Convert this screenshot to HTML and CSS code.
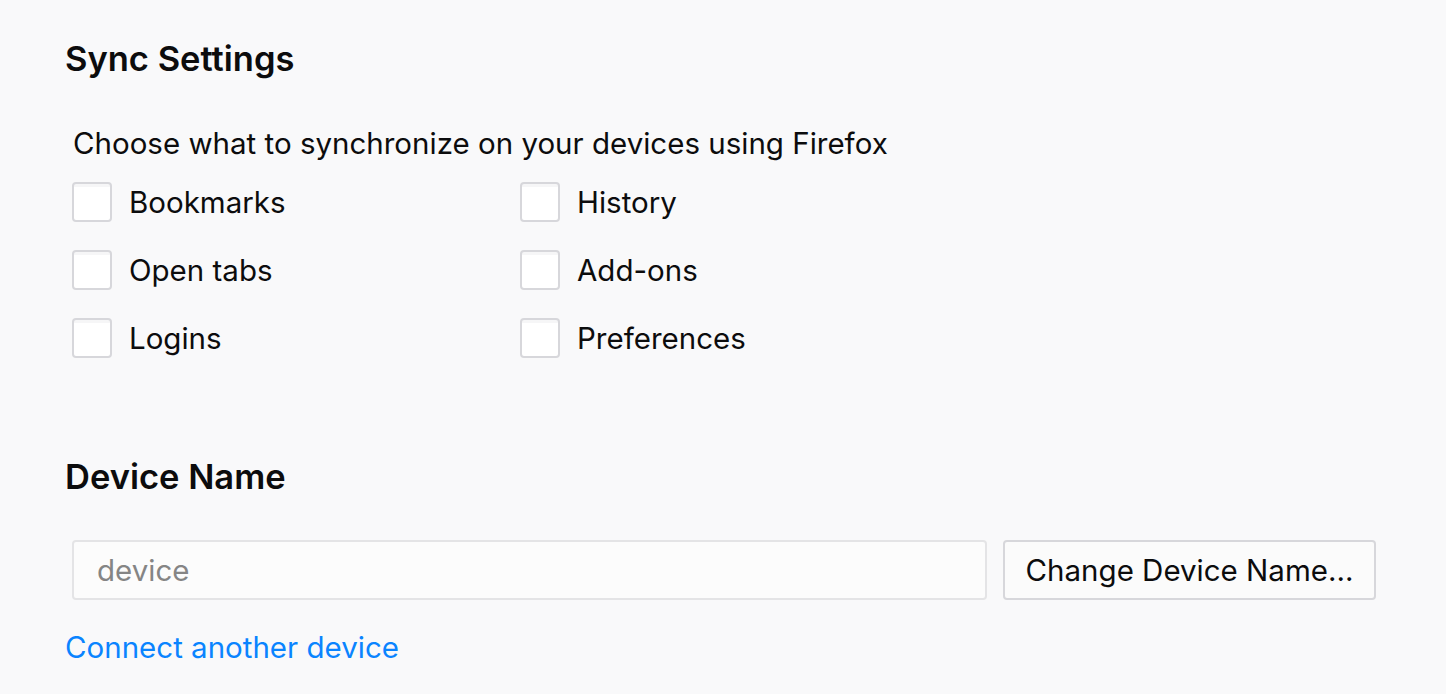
FILE: index.html
```html
<!DOCTYPE html>
<html>
<head>
<meta charset="utf-8">
<link rel="stylesheet" href="styles.css">
</head>
<body>
<div class="page">
  <h1 class="title">Sync Settings</h1>
  <p class="desc">Choose what to synchronize on your devices using Firefox</p>
  <div class="grid">
    <label class="opt"><span class="box"></span><span class="lbl">Bookmarks</span></label>
    <label class="opt"><span class="box"></span><span class="lbl">History</span></label>
    <label class="opt"><span class="box"></span><span class="lbl">Open tabs</span></label>
    <label class="opt"><span class="box"></span><span class="lbl">Add-ons</span></label>
    <label class="opt"><span class="box"></span><span class="lbl">Logins</span></label>
    <label class="opt"><span class="box"></span><span class="lbl">Preferences</span></label>
  </div>
  <h1 class="title title2">Device Name</h1>
  <div class="devrow">
    <div class="input">device</div>
    <div class="btn">Change Device Name…</div>
  </div>
  <a class="link">Connect another device</a>
</div>
</body>
</html>
```
FILE: styles.css
```css
html, body {
  margin: 0;
  padding: 0;
  background: #f9f9fa;
}
body {
  font-family: Inter, "Noto Sans", sans-serif;
  color: #0c0c0d;
  width: 1446px;
  height: 694px;
  overflow: hidden;
}
.page {
  padding: 0 0 0 65px;
  display: flex;
  flex-direction: column;
  align-items: flex-start;
}
.title {
  font-size: 34.5px;
  font-weight: 600;
  line-height: 40px;
  margin: 39px 0 0 0;
}
.desc {
  font-size: 29.5px;
  line-height: 36px;
  margin: 46px 0 0 8px;
}
.grid {
  margin: 21px 0 0 7px;
  display: grid;
  grid-template-columns: 448px 448px;
  row-gap: 28px;
}
.opt {
  display: flex;
  align-items: center;
  height: 40px;
  font-size: 29.5px;
}
.box {
  width: 36px;
  height: 36px;
  border: 2px solid #d7d7db;
  border-radius: 4px;
  background: linear-gradient(#f6f6f7 0, #f6f6f7 3px, #ffffff 3px);
  flex: none;
}
.lbl {
  margin-left: 17px;
}
.title2 {
  margin-top: 99px;
}
.devrow {
  margin: 43px 0 0 7px;
  display: flex;
  gap: 16px;
}
.input {
  width: 888px;
  height: 56px;
  border: 2px solid #e4e4e6;
  border-radius: 4px;
  background: #fcfcfc;
  color: #858585;
  font-size: 29.5px;
  line-height: 56px;
  padding-left: 23px;
}
.btn {
  width: 369px;
  height: 56px;
  border: 2px solid #d7d7db;
  border-radius: 4px;
  background: #fbfbfb;
  font-size: 29.5px;
  line-height: 56px;
  text-align: center;
}
.link {
  margin-top: 27px;
  color: #0a84ff;
  font-size: 29.5px;
  line-height: 40px;
}
```
